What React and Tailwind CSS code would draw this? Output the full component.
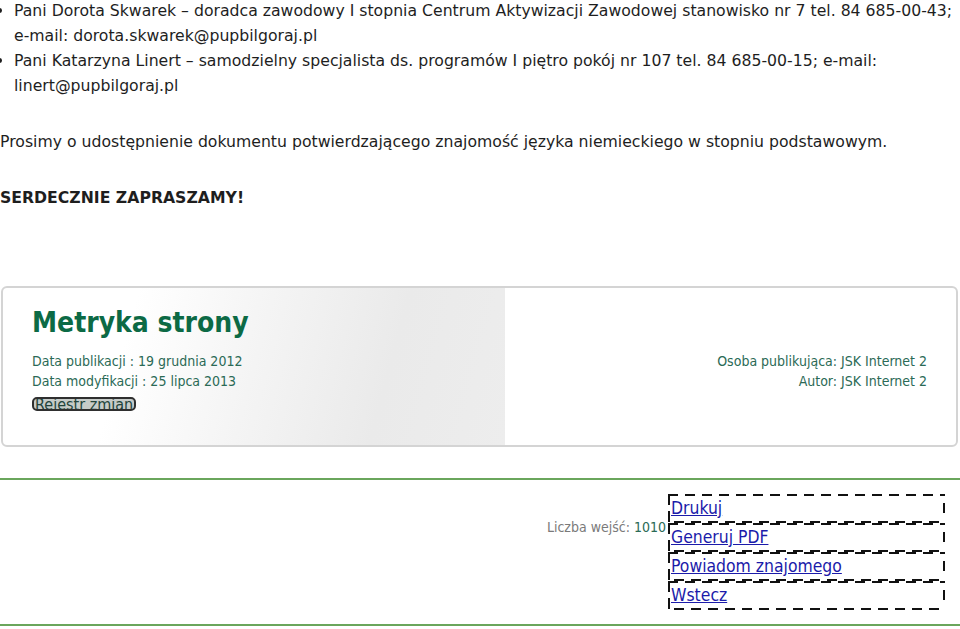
import React from "react";

const body = { fontFamily: '"DejaVu Sans", "Liberation Sans", sans-serif' };
const cond = { fontFamily: '"DejaVu Sans Condensed", "DejaVu Sans", "Liberation Sans Narrow", sans-serif', fontStretch: "condensed" };

export default function App() {
  return (
    <div className="w-[960px] h-[629px] overflow-hidden bg-white text-[#1e1e1e]" style={body}>
      <ul className="list-disc list-outside pl-[14px] mt-[-2px] text-[15.7px] leading-[25px]">
        <li>Pani Dorota Skwarek – doradca zawodowy I stopnia Centrum Aktywizacji Zawodowej stanowisko nr 7 tel. 84 685-00-43; e-mail: dorota.skwarek@pupbilgoraj.pl</li>
        <li>Pani Katarzyna Linert – samodzielny specjalista ds. programów I piętro pokój nr 107 tel. 84 685-00-15; e-mail: linert@pupbilgoraj.pl</li>
      </ul>
      <p className="mt-[31px] text-[15.7px] leading-[25px]">
        Prosimy o udostępnienie dokumentu potwierdzającego znajomość języka niemieckiego w stopniu podstawowym.
      </p>
      <p className="mt-[31px] text-[15.7px] leading-[25px] font-bold">SERDECZNIE ZAPRASZAMY!</p>

      <div
        className="mt-[76px] ml-[1px] mr-[2px] h-[161px] border-2 border-[#d4d4d4] rounded-[6px] bg-no-repeat bg-[length:502px_100%] bg-[linear-gradient(105deg,#ffffff_25%,#f4f4f4_50%,#eaeaea_75%,#ededed_100%)] pl-[29px] pr-[29px] pt-[18px]"
        style={cond}
      >
        <h2 className="text-[28px] leading-[34px] font-bold text-[#0c6a45]">Metryka strony</h2>
        <div className="mt-[11px] flex justify-between text-[14px] leading-[20px] text-[#2b6a56]">
          <div>
            <div>Data publikacji : 19 grudnia 2012</div>
            <div>Data modyfikacji : 25 lipca 2013</div>
          </div>
          <div className="text-right">
            <div>Osoba publikująca: JSK Internet 2</div>
            <div>Autor: JSK Internet 2</div>
          </div>
        </div>
        <div className="mt-[6px] leading-[14px]">
          <span className="inline-block align-top h-[14px] overflow-hidden border-2 border-[#2f2f2f] rounded-[5px] bg-[#c6cbc8] px-[1px] text-[16px] leading-[12px] text-[#22443a]">
            Rejestr zmian
          </span>
        </div>
      </div>

      <div className="mt-[31px] border-t-2 border-[#6aa65c] h-[148px] border-b-2 flex justify-end items-start pr-[15px] pt-[14px]">
        <div className="mt-[23px] mr-[2px] text-[14px] leading-[20px] text-[#7a7a7a]" style={cond}>
          Liczba wejść: <span className="text-[#2b6a56]">1010</span>
        </div>
        <ul className="w-[277px] text-[17.4px] leading-[25px]" style={cond}>
          {["Drukuj", "Generuj PDF", "Powiadom znajomego", "Wstecz"].map((t) => (
            <li
              key={t}
              className="p-[2px] pl-[3px] bg-no-repeat bg-[repeating-linear-gradient(90deg,#111_0_10px,transparent_10px_17px),repeating-linear-gradient(90deg,transparent_0_6px,#111_6px_16px,transparent_16px_17px),repeating-linear-gradient(180deg,#111_0_11px,transparent_11px_17px),repeating-linear-gradient(180deg,transparent_0_9px,#111_9px_19px,transparent_19px_24px)] bg-[length:100%_2px,100%_2px,2px_100%,2px_100%] bg-[position:0_0,0_100%,0_0,100%_0]"
            >
              <a href="#" className="underline text-[#1b1baa]">{t}</a>
            </li>
          ))}
        </ul>
      </div>
    </div>
  );
}
